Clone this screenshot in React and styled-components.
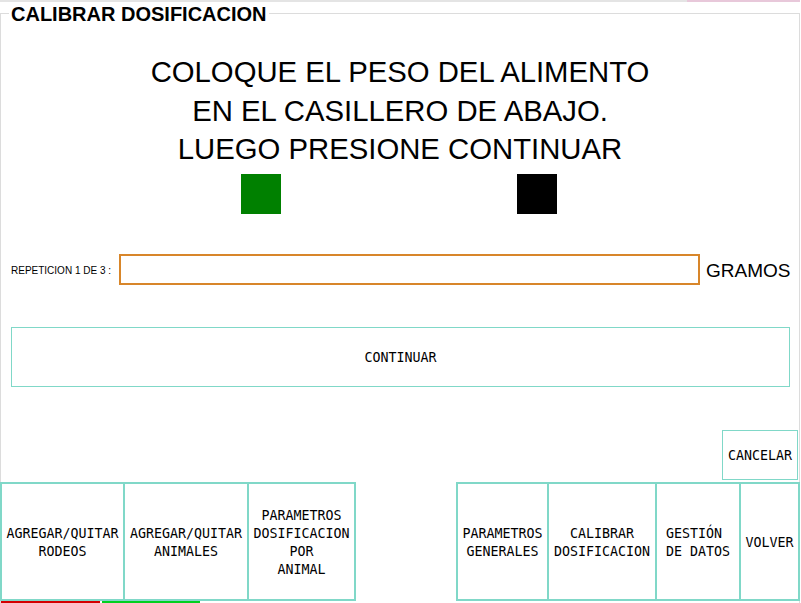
import React from 'react';
import styled, { createGlobalStyle } from 'styled-components';

const GlobalStyle = createGlobalStyle`
  html, body {
    margin: 0;
    padding: 0;
    background: #ffffff;
    overflow: hidden;
  }
  * { box-sizing: border-box; }
`;

const Page = styled.div`
  width: 801px;
  height: 603px;
  background: #ffffff;
  display: flex;
  flex-direction: column;
  font-family: "Liberation Sans", Arial, sans-serif;
  color: #000;
`;

const TopStrip = styled.div`
  display: flex;
  height: 2px;
  width: 800px;
`;

const StripPart = styled.div`
  height: 100%;
  background: ${p => p.color};
  flex: ${p => (p.grow ? 1 : 'none')};
  width: ${p => (p.w ? `${p.w}px` : 'auto')};
`;

const Frame = styled.div`
  position: relative;
  margin-top: 11px;
  width: 800px;
  height: 590px;
  border: 1px solid #dcdcdc;
  border-bottom: none;
  display: flex;
  flex-direction: column;
`;

const Legend = styled.div`
  position: absolute;
  top: -10px;
  left: 8px;
  padding: 0 2px;
  background: #fff;
  font-weight: bold;
  font-size: 20px;
  line-height: 20px;
`;

const Heading = styled.div`
  margin-top: 39px;
  text-align: center;
  font-size: 29.3px;
  line-height: 38.5px;
`;

const SquareRow = styled.div`
  margin-top: 5.5px;
  display: flex;
  justify-content: center;
  gap: 236px;
  padding-right: 2px;
`;

const Square = styled.div`
  width: 40px;
  height: 40px;
  background: ${p => p.color};
`;

const InputRow = styled.div`
  margin-top: 40px;
  height: 31px;
  display: flex;
  align-items: center;
  padding-left: 10px;
`;

const Label = styled.label`
  width: 108px;
  font-size: 10px;
  padding-top: 2px;
`;

const Field = styled.input`
  width: 581px;
  height: 31px;
  border: 2px solid #d8862a;
  outline: none;
  background: #fff;
  padding: 0 4px;
`;

const Unit = styled.span`
  margin-left: 6px;
  font-size: 19px;
  padding-top: 2px;
`;

const Button = styled.button`
  background: #fff;
  color: #000;
  font-family: "DejaVu Sans Mono", "Liberation Mono", monospace;
  font-size: 13.3px;
  line-height: 18px;
  white-space: pre;
  text-align: center;
  padding: 2px 0 0;
  cursor: pointer;
`;

const WideButton = styled(Button)`
  margin: 42px 9px 0 10px;
  height: 60px;
  border: 1px solid #80d8c8;
`;

const CancelRow = styled.div`
  margin-top: 43px;
  height: 50px;
  display: flex;
  justify-content: flex-end;
  padding-right: 1px;
`;

const SmallButton = styled(Button)`
  width: 76px;
  height: 50px;
  border: 1px solid #80d8c8;
`;

const NavRow = styled.div`
  margin: 2px -1px 0;
  height: 119px;
  display: flex;
  justify-content: space-between;
`;

const NavGroup = styled.div`
  display: flex;
`;

const NavButton = styled(Button)`
  width: ${p => p.w}px;
  height: 119px;
  border: 2px solid #80d8c8;
  & + & { margin-left: -2px; }
`;

const BottomStrip = styled.div`
  margin: 0 -1px;
  height: 2px;
  display: flex;
  gap: 2px;
  padding-left: 1px;
`;

const StripLine = styled.div`
  width: ${p => p.w}px;
  height: 2px;
  background: ${p => p.color};
`;

const leftButtons = [
  { w: 125, text: 'AGREGAR/QUITAR\nRODEOS' },
  { w: 126, text: 'AGREGAR/QUITAR\nANIMALES' },
  { w: 109, text: 'PARAMETROS\nDOSIFICACION\nPOR\nANIMAL' },
];

const rightButtons = [
  { w: 93, text: 'PARAMETROS\nGENERALES' },
  { w: 110, text: 'CALIBRAR\nDOSIFICACION' },
  { w: 86, text: 'GESTIÓN \nDE DATOS' },
  { w: 61, text: 'VOLVER' },
];

export default function App() {
  return (
    <Page>
      <GlobalStyle />
      <TopStrip>
        <StripPart grow color="#e4e4e4" />
        <StripPart w={113} color="#e8c8da" />
      </TopStrip>
      <Frame>
        <Legend>CALIBRAR DOSIFICACION</Legend>
        <Heading>
          COLOQUE EL PESO DEL ALIMENTO<br />
          EN EL CASILLERO DE ABAJO.<br />
          LUEGO PRESIONE CONTINUAR
        </Heading>
        <SquareRow>
          <Square color="#008000" />
          <Square color="#000000" />
        </SquareRow>
        <InputRow>
          <Label>REPETICION 1 DE 3 :</Label>
          <Field type="text" />
          <Unit>GRAMOS</Unit>
        </InputRow>
        <WideButton>CONTINUAR</WideButton>
        <CancelRow>
          <SmallButton>CANCELAR</SmallButton>
        </CancelRow>
        <NavRow>
          <NavGroup>
            {leftButtons.map(b => (
              <NavButton key={b.text} w={b.w}>{b.text}</NavButton>
            ))}
          </NavGroup>
          <NavGroup>
            {rightButtons.map(b => (
              <NavButton key={b.text} w={b.w}>{b.text}</NavButton>
            ))}
          </NavGroup>
        </NavRow>
        <BottomStrip>
          <StripLine w={99} color="#d40000" />
          <StripLine w={98} color="#00d020" />
        </BottomStrip>
      </Frame>
    </Page>
  );
}
